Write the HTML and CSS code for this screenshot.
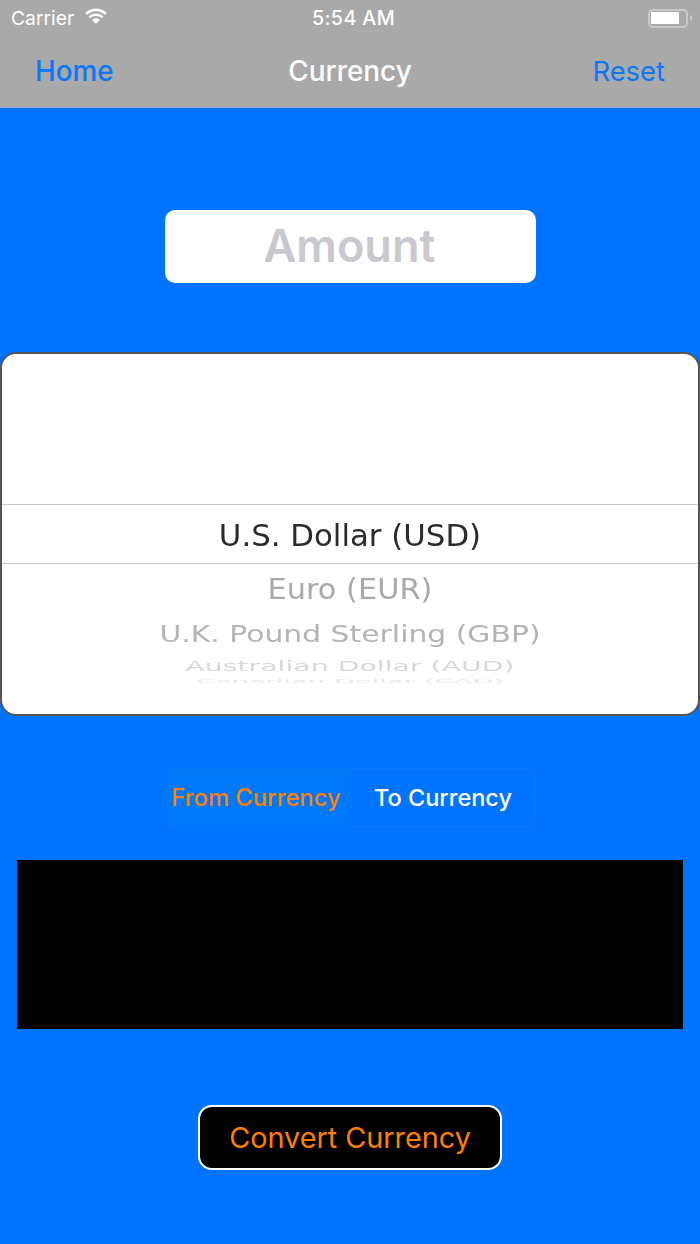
FILE: index.html
```html
<!DOCTYPE html>
<html lang="en">
<head>
<meta charset="utf-8">
<title>Currency</title>
<link rel="stylesheet" href="styles.css">
</head>
<body>
<header class="top">
  <div class="status">
    <div class="status-left">
      <span>Carrier</span>
      <svg class="wifi" width="24" height="17" viewBox="0 0 24 17"><path d="M12 3.2c3.6 0 6.8 1.400 9.200 3.700l1.700-1.900C20 2.200 16.200.5 12 .5S4 2.200 1.100 5l1.700 1.900C5.200 4.600 8.400 3.200 12 3.200z" fill="#fff"/><path d="M12 8.100c2.200 0 4.200.8 5.700 2.200l1.800-1.900C17.500 6.500 14.900 5.400 12 5.400S6.500 6.500 4.500 8.400l1.800 1.900C7.800 8.900 9.800 8.100 12 8.100z" fill="#fff"/><path d="M12 10.300c-1.500 0-2.800.6-3.800 1.500L12 16l3.800-4.200c-1-.9-2.300-1.500-3.800-1.500z" fill="#fff"/></svg>
    </div>
    <div class="clock">5:54 AM</div>
    <div class="status-right">
      <div class="battery"><div class="charge"></div></div>
      <div class="nub"></div>
    </div>
  </div>
  <nav class="nav">
    <a class="nav-link nav-home">Home</a>
    <h1 class="nav-title">Currency</h1>
    <a class="nav-link">Reset</a>
  </nav>
</header>
<main class="main">
  <div class="amount">Amount</div>
  <section class="picker">
    <div class="pick-row pick-sel">U.S. Dollar (USD)</div>
    <div class="pick-row pick-1">Euro (EUR)</div>
    <div class="pick-row pick-2">U.K. Pound Sterling (GBP)</div>
    <div class="pick-row pick-3">Australian Dollar (AUD)</div>
    <div class="pick-row pick-4">Canadian Dollar (CAD)</div>
  </section>
  <div class="segments">
    <div class="seg seg-on">From Currency</div>
    <div class="seg seg-off">To Currency</div>
  </div>
  <div class="result"></div>
  <button class="convert">Convert Currency</button>
</main>
</body>
</html>
```
FILE: styles.css
```css
* { box-sizing: border-box; }
html, body { margin: 0; padding: 0; }
body {
  width: 700px;
  height: 1244px;
  overflow: hidden;
  background: #0073ff;
  font-family: Inter, "Liberation Sans", sans-serif;
}
.top { height: 108px; background: #a9a9a9; border-bottom: 1px solid #8fa9d6; }
.status {
  height: 36px;
  display: grid;
  grid-template-columns: 1fr auto 1fr;
  align-items: center;
  color: #fff;
  padding: 0 8px 0 11px;
}
.status-left { display: flex; align-items: center; gap: 10px; font-size: 19.300px; }
.wifi { margin-top: -3px; }
.clock { margin-left: 4px; font-size: 19.700px; font-weight: 500; letter-spacing: .4px; }
.status-right { display: flex; align-items: center; justify-content: flex-end; gap: 2px; }
.battery {
  width: 40px;
  height: 19px;
  border: 2px solid #c9c9c9;
  border-radius: 5px;
  padding: 1.500px 1px;
}
.charge { width: 28px; height: 12px; background: #fff; border-radius: 1px; }
.nub { width: 2px; height: 6px; background: #c9c9c9; border-radius: 0 2px 2px 0; }
.nav {
  height: 71px;
  display: grid;
  grid-template-columns: 1fr auto 1fr;
  align-items: center;
  padding: 0 35px 2px;
}
.nav-link { font-size: 27.400px; color: #0a78f5; text-align: right; }
.nav-home { text-align: left; font-size: 27.800px; font-weight: 500; }
.nav-title { margin: 0; font-size: 27.900px; font-weight: 500; color: #fff; }
.main { display: flex; flex-direction: column; align-items: center; padding-top: 102px; }
.amount {
  width: 371px;
  height: 73px;
  padding: 0 1px 2px 0;
  background: #fff;
  border-radius: 10px;
  display: flex;
  align-items: center;
  justify-content: center;
  font-size: 45.100px;
  font-weight: 600;
  color: #c8c8ce;
}
.picker {
  width: 700px;
  height: 364px;
  margin-top: 69px;
  padding-top: 150px;
  background: #fff;
  border: 2px solid #555;
  border-radius: 16px;
  font-family: "DejaVu Sans", Verdana, sans-serif;
  text-align: center;
  overflow: hidden;
  will-change: transform;
}
.pick-row { white-space: nowrap; }
.pick-sel {
  height: 60px;
  line-height: 61px;
  border-top: 1px solid #c8c8c8;
  border-bottom: 1px solid #c8c8c8;
  font-size: 30.800px;
  color: #2b2b2b;
}
.pick-1 { height: 50px; line-height: 52px; font-size: 30.400px; color: #a9a9a9; transform: scaleY(.93); }
.pick-2 { height: 40px; line-height: 42px; font-size: 28px; color: #b4b4b4; transform: scale(1.065, .8); }
.pick-3 { height: 24px; line-height: 24px; font-size: 26px; color: #d8d8d8; transform: scale(1.09, .55); }
.pick-4 { height: 6px; line-height: 6px; font-size: 26px; color: #e8e8e8; transform: scale(1.054, .2); }
.segments {
  width: 371px;
  height: 59px;
  margin-top: 52px;
  display: grid;
  grid-template-columns: 185px 186px;
  border: 1px solid #0a78fa;
  border-radius: 8px;
  overflow: hidden;
  font-size: 23.800px;
  font-weight: 500;
}
.seg { display: flex; align-items: center; justify-content: center; padding-bottom: 1px; white-space: nowrap; }
.seg-on { padding-right: 4px; background: #0078fa; color: #ff7f0a; }
.seg-off { padding-right: 1px; font-size: 23.500px; color: #fff; }
.result { width: 666px; height: 169px; margin-top: 33px; background: #000; }
.convert {
  width: 304px;
  height: 65px;
  margin-top: 76px;
  background: #000;
  border: 2px solid #fff;
  border-radius: 14px;
  color: #ff8000;
  font-family: inherit;
  font-size: 28.800px;
  padding: 0;
}
```
